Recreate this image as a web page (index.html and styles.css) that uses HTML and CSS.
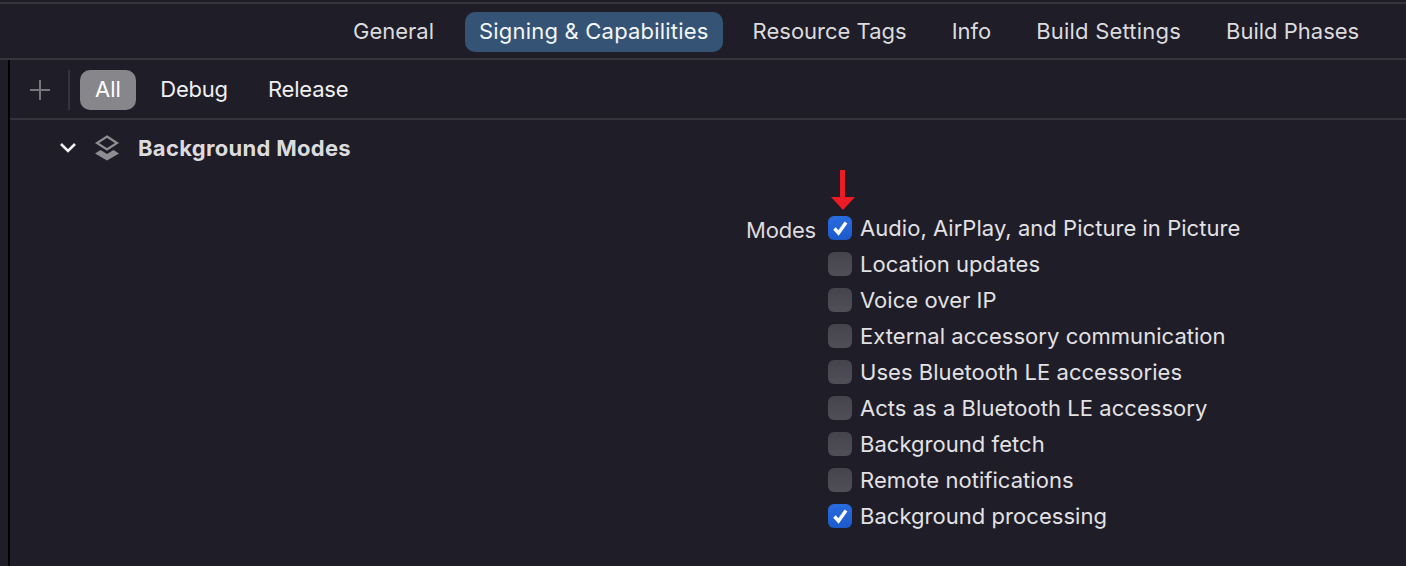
FILE: index.html
```html
<!DOCTYPE html>
<html lang="en">
<head>
    <meta charset="UTF-8">
    <meta name="viewport" content="width=device-width, initial-scale=1.0">
    <title>Signing &amp; Capabilities</title>
    <link rel="stylesheet" href="styles.css">
</head>
<body>
    <nav class="tabs">
        <span class="tab">General</span>
        <span class="tab active">Signing &amp; Capabilities</span>
        <span class="tab">Resource Tags</span>
        <span class="tab">Info</span>
        <span class="tab wide">Build Settings</span>
        <span class="tab">Build Phases</span>
    </nav>

    <div class="main">
        <div class="toolbar">
            <svg class="plus" width="22" height="22" viewBox="0 0 22 22">
                <path d="M11 1v20M1 11h20" stroke="#77767c" stroke-width="2" fill="none"/>
            </svg>
            <span class="divider"></span>
            <span class="filter active">All</span>
            <span class="filter">Debug</span>
            <span class="filter">Release</span>
        </div>

        <div class="section-head">
            <svg class="chevron" width="18" height="12" viewBox="0 0 18 12">
                <path d="M2 2l7 7 7-7" stroke="#f2f2f3" stroke-width="2.600" fill="none"/>
            </svg>
            <svg class="layers" width="26" height="26" viewBox="0 0 26 26">
                <path d="M13 1.500l10 6.500-10 6.500L3 8z" stroke="#8e8d92" stroke-width="2.200" fill="none"/>
                <path d="M1 18.500L6.500 15 13 19l6.500-4 5.500 3.500L13 25.500z" fill="#8e8d92"/>
            </svg>
            <span class="section-title">Background Modes</span>
        </div>

        <div class="modes">
            <span class="modes-label">Modes</span>
            <ul class="mode-list">
                <li class="mode">
                    <svg class="arrow" width="26" height="40" viewBox="0 0 26 40">
                        <path d="M10 0h5v27h10L13 40 1 27h9z" fill="#ea1c24"/>
                    </svg>
                    <span class="check on">
                        <svg width="24" height="24" viewBox="0 0 24 24"><path d="M6.500 12.500l4 4.500 7.500-10.500" stroke="#fff" stroke-width="3.400" fill="none"/></svg>
                    </span>
                    Audio, AirPlay, and Picture in Picture
                </li>
                <li class="mode"><span class="check"></span>Location updates</li>
                <li class="mode"><span class="check"></span>Voice over IP</li>
                <li class="mode"><span class="check"></span>External accessory communication</li>
                <li class="mode"><span class="check"></span>Uses Bluetooth LE accessories</li>
                <li class="mode"><span class="check"></span>Acts as a Bluetooth LE accessory</li>
                <li class="mode"><span class="check"></span>Background fetch</li>
                <li class="mode"><span class="check"></span>Remote notifications</li>
                <li class="mode">
                    <span class="check on">
                        <svg width="24" height="24" viewBox="0 0 24 24"><path d="M6.500 12.500l4 4.500 7.500-10.500" stroke="#fff" stroke-width="3.400" fill="none"/></svg>
                    </span>
                    Background processing
                </li>
            </ul>
        </div>
    </div>
</body>
</html>
```

FILE: styles.css
```css
html, body {
    height: 100%;
}
body {
    margin: 0;
    overflow: hidden;
    background-color: #1f1d27;
    color: #e2e1e4;
    font-family: 'Inter', 'Liberation Sans', sans-serif;
    font-size: 22px;
}
.tabs {
    display: flex;
    align-items: center;
    gap: 17px;
    height: 52px;
    margin-top: 2px;
    padding-top: 2px;
    padding-left: 339px;
    border-top: 2px solid #35343c;
    border-bottom: 2px solid #35343c;
}
.tab {
    padding: 0 14px 2px;
    line-height: 38px;
    border-radius: 10px;
    color: #dcdbde;
}
.tab.active {
    margin-right: -1px;
    background-color: #345375;
    color: #f4f6f9;
    letter-spacing: 0.2px;
}
.tab.wide {
    letter-spacing: 0.2px;
}
.main {
    margin-left: 8px;
    border-left: 2px solid #000;
    height: 506px;
}
.toolbar {
    display: flex;
    align-items: center;
    height: 56px;
    padding-top: 2px;
    padding-left: 19px;
    border-bottom: 2px solid #35343c;
}
.divider {
    width: 2px;
    height: 40px;
    margin: 0 10px 0 17px;
    background-color: #35343c;
}
.filter {
    padding: 0 15px 2px;
    margin-right: 10px;
    line-height: 38px;
    border-radius: 10px;
    color: #f0eff1;
    letter-spacing: -0.2px;
}
.filter.active {
    margin-right: 9.400px;
    background-color: #87868b;
    color: #fff;
    letter-spacing: 0;
}
.section-head {
    display: flex;
    align-items: center;
    height: 56px;
    padding-left: 49px;
}
.layers {
    margin-left: 17px;
}
.section-title {
    margin-left: 18px;
    font-weight: 700;
    color: #dcdbde;
    letter-spacing: 0.3px;
}
.modes {
    display: flex;
    align-items: flex-start;
    margin-top: 34px;
    padding-left: 736px;
}
.modes-label {
    width: 82px;
    line-height: 36px;
    margin-top: 2px;
    color: #dcdbde;
    letter-spacing: -0.2px;
}
.mode-list {
    margin: 0;
    padding: 0;
    list-style: none;
}
.mode {
    position: relative;
    display: flex;
    align-items: center;
    gap: 8px;
    height: 36px;
    white-space: nowrap;
    letter-spacing: 0.04px;
}
.check {
    width: 24px;
    height: 24px;
    border-radius: 6px;
    background: linear-gradient(#45434c, #504e57);
}
.check.on {
    background: linear-gradient(#2a6be0, #1c5acb);
}
.check svg {
    display: block;
}
.arrow {
    position: absolute;
    left: 2px;
    top: -40px;
}
```
